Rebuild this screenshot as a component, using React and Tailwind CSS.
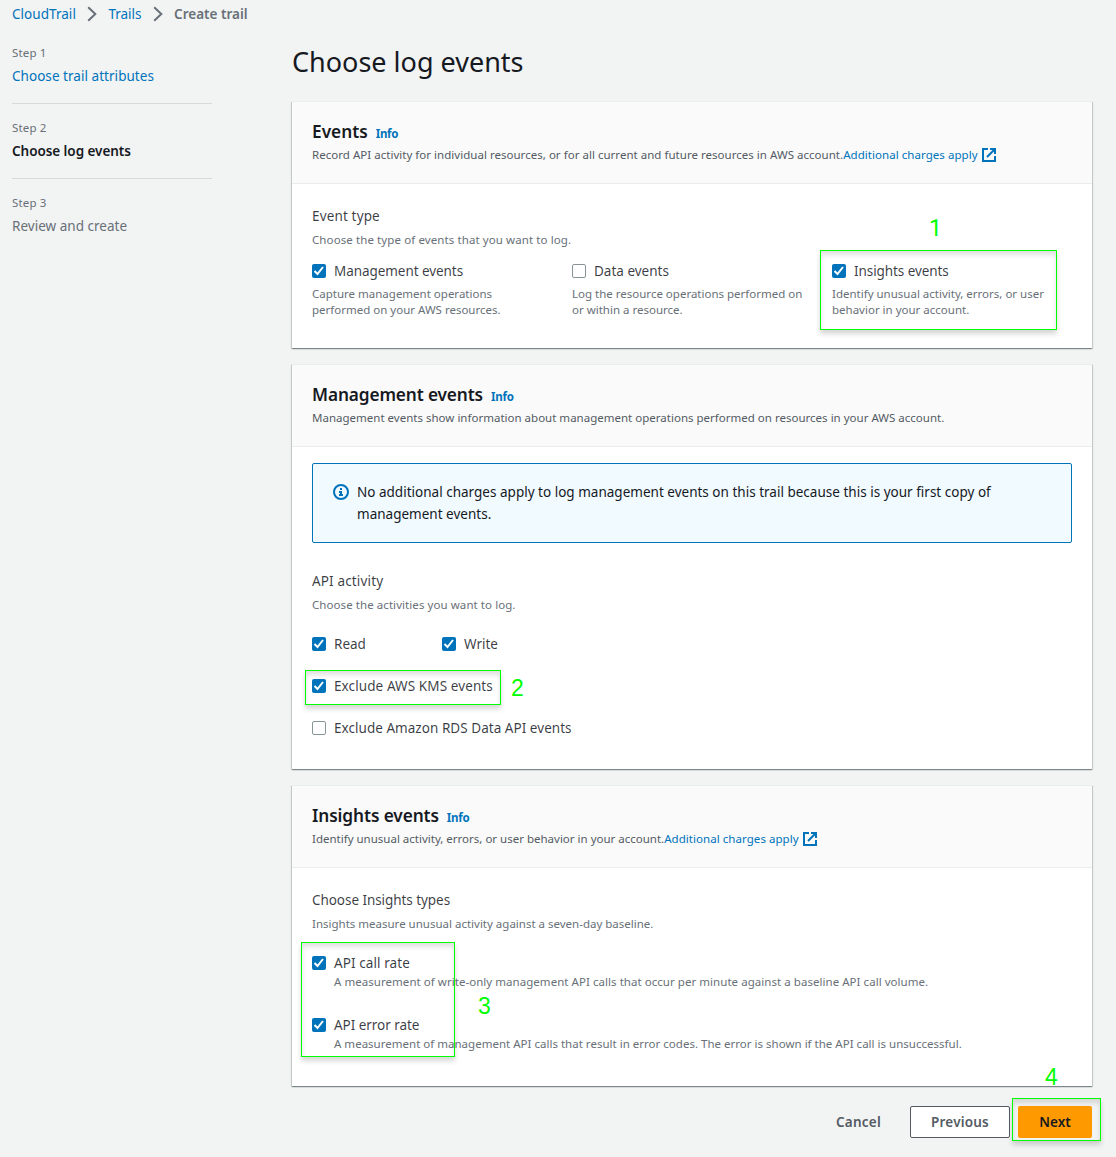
import React from "react";

function Chevron() {
  return (
    <svg className="ml-[8.5px] mr-2 h-4 w-4" viewBox="0 0 16 16" fill="none" stroke="#687078" strokeWidth="2">
      <path d="M4.2 1.3 11.3 8l-7.1 6.7" />
    </svg>
  );
}

function ExternalIcon() {
  return (
    <svg className="ml-[3px] h-4 w-4 shrink-0" viewBox="0 0 16 16" fill="none" stroke="#0073bb" strokeWidth="2">
      <path d="M7 2H2v12h12V9" />
      <path d="M9 2h5v5M6 10l7.5-7.5" />
    </svg>
  );
}

function InfoIcon() {
  return (
    <svg className="mt-[3px] h-4 w-4 shrink-0" viewBox="0 0 16 16" fill="none" stroke="#0073bb" strokeWidth="2">
      <circle cx="8" cy="8" r="7" />
      <path d="M8 4v2M6 8h2v3M6 11h4" />
    </svg>
  );
}

function Box({ checked }) {
  return checked ? (
    <span className="flex h-[14px] w-[14px] shrink-0 items-center justify-center rounded-[2px] bg-[#0073bb]">
      <svg className="h-[14px] w-[14px]" viewBox="0 0 14 14" fill="none" stroke="#fff" strokeWidth="2">
        <path d="M2.5 7 5.5 10l5.5-7" />
      </svg>
    </span>
  ) : (
    <span className="h-[14px] w-[14px] shrink-0 rounded-[2px] border border-[#879596] bg-white" />
  );
}

function Check({ checked = true, children, className = "" }) {
  return (
    <div className={"flex h-[22px] items-center gap-2 whitespace-nowrap text-[13.5px] leading-[22px] text-[#16191f]/85 " + className}>
      <Box checked={checked} />
      <span>{children}</span>
    </div>
  );
}

function Hint({ className = "", children }) {
  return <p className={"whitespace-nowrap text-[11.5px] leading-4 text-[#687078] " + className}>{children}</p>;
}

function Card({ title, titleClass, desc, descClass = "", link, className, children }) {
  return (
    <section
      className={
        "w-[800px] border-t border-[#eaeded] bg-white shadow-[0_1px_1px_0_rgba(0,28,36,0.3),1px_1px_1px_0_rgba(0,28,36,0.15),-1px_1px_1px_0_rgba(0,28,36,0.15)] " +
        className
      }
    >
      <header className="h-[82px] border-b border-[#eaeded] bg-[#fafafa] px-5 pt-[19px]">
        <div className="flex h-[22px] items-baseline gap-2 leading-[22px]">
          <h2 className={"font-semibold text-[#16191f] " + titleClass}>{title}</h2>
          <a className="text-[11.5px] font-bold tracking-[-0.25px] text-[#0073bb]">Info</a>
        </div>
        <div className="mt-1 flex h-4 items-center whitespace-nowrap text-[11.5px] leading-4 text-[#545b64]">
          <span className={descClass}>{desc}</span>
          {link && (
            <a className="flex items-center tracking-[0.05px] text-[#0073bb]">
              Additional charges apply
              <ExternalIcon />
            </a>
          )}
        </div>
      </header>
      <div className="px-5">{children}</div>
    </section>
  );
}

function Label({ children, className = "" }) {
  return <h3 className={"text-[13.5px] leading-[22px] text-[#16191f]/85 " + className}>{children}</h3>;
}

const frame =
  "pointer-events-none absolute border border-[#00ff00] shadow-[0_4px_5px_rgba(0,0,0,0.16),inset_0_4px_5px_rgba(0,0,0,0.12)] ";
const digit = "pointer-events-none absolute text-[23px] leading-6 text-[#00ff00] ";

export default function App() {
  return (
    <div className="relative h-[1157px] w-[1116px] overflow-hidden bg-[#f2f3f3] font-['Noto_Sans',sans-serif] text-[13.5px] leading-[22px]">
      <nav className="flex h-[25px] items-center pl-3 pt-[3px]">
        <a className="tracking-[0.04px] text-[#0073bb]">CloudTrail</a>
        <Chevron />
        <a className="text-[#0073bb]">Trails</a>
        <Chevron />
        <span className="font-semibold text-[#687078]">Create trail</span>
      </nav>

      <div className="flex pl-3">
        <aside className="w-[200px] shrink-0 pt-5">
          <div className="h-[59px] border-b border-[#d5dbdb]">
            <Hint className="tracking-[0.15px]">Step 1</Hint>
            <a className="mt-1 block tracking-[0.04px] text-[#0073bb]">Choose trail attributes</a>
          </div>
          <div className="mt-4 h-[59px] border-b border-[#d5dbdb]">
            <Hint className="tracking-[0.15px]">Step 2</Hint>
            <div className="mt-1 font-semibold tracking-[-0.05px] text-[#16191f]">Choose log events</div>
          </div>
          <div className="mt-4">
            <Hint className="tracking-[0.15px]">Step 3</Hint>
            <div className="mt-1 tracking-[0.02px] text-[#687078]">Review and create</div>
          </div>
        </aside>

        <main className="ml-20 w-[800px] pt-[19px]">
          <h1 className="h-9 text-[27px] leading-9 text-[#16191f]">Choose log events</h1>

          <Card
            title="Events"
            titleClass="text-[17.25px]"
            desc="Record API activity for individual resources, or for all current and future resources in AWS account."
            descClass="tracking-[0.027px]"
            link
            className="mt-[21px] h-[247px]"
          >
            <Label className="pt-[21px] tracking-[0.15px]">Event type</Label>
            <Hint className="mt-[5px] tracking-[0.1px]">Choose the type of events that you want to log.</Hint>
            <div className="mt-3 grid grid-cols-[260px_260px_240px]">
              <div>
                <Check className="tracking-[-0.06px]">Management events</Check>
                <Hint className="mt-1">
                  Capture management operations
                  <br />
                  performed on your AWS resources.
                </Hint>
              </div>
              <div>
                <Check checked={false}>Data events</Check>
                <Hint className="mt-1">
                  Log the resource operations performed on
                  <br />
                  or within a resource.
                </Hint>
              </div>
              <div>
                <Check className="tracking-[-0.08px]">Insights events</Check>
                <Hint className="mt-1">
                  Identify unusual activity, errors, or user
                  <br />
                  behavior in your account.
                </Hint>
              </div>
            </div>
          </Card>

          <Card
            title="Management events"
            titleClass="text-[17.25px] tracking-[-0.12px]"
            desc="Management events show information about management operations performed on resources in your AWS account."
            descClass="tracking-[0.008px]"
            className="mt-4 h-[405px]"
          >
            <div className="mt-4 flex h-20 gap-2 rounded-[2px] border border-[#0073bb] bg-[#f1faff] pl-5 pt-[17px] text-[#16191f]">
              <InfoIcon />
              <p className="w-[660px] tracking-[0.01px]">
                No additional charges apply to log management events on this trail because this is your first copy of
                management events.
              </p>
            </div>
            <Label className="mt-[27px] tracking-[0.15px]">API activity</Label>
            <Hint className="mt-[5px] tracking-[0.07px]">Choose the activities you want to log.</Hint>
            <div className="mt-5 grid grid-cols-[130px_130px]">
              <Check>Read</Check>
              <Check>Write</Check>
            </div>
            <Check className="mt-5 tracking-[0.1px]">Exclude AWS KMS events</Check>
            <Check checked={false} className="mt-5 tracking-[0.04px]">
              Exclude Amazon RDS Data API events
            </Check>
          </Card>

          <Card
            title="Insights events"
            titleClass="text-[17.25px] tracking-[-0.1px]"
            desc="Identify unusual activity, errors, or user behavior in your account."
            link
            className="mt-4 h-[301px]"
          >
            <Label className="pt-[21px] tracking-[-0.06px]">Choose Insights types</Label>
            <Hint className="mt-[5px]">Insights measure unusual activity against a seven-day baseline.</Hint>
            <Check className="mt-5 tracking-[0.09px]">API call rate</Check>
            <Hint className="pl-[22px] tracking-[0.045px]">
              A measurement of write-only management API calls that occur per minute against a baseline API call volume.
            </Hint>
            <Check className="mt-6 tracking-[-0.04px]">API error rate</Check>
            <Hint className="pl-[22px] tracking-[0.013px]">
              A measurement of management API calls that result in error codes. The error is shown if the API call is
              unsuccessful.
            </Hint>
          </Card>

          <div className="mt-5 flex h-8 items-center justify-end font-semibold text-[#545b64]">
            <button className="mr-[29px] tracking-[0.23px]">Cancel</button>
            <button className="mr-2 h-8 w-[100px] rounded-[2px] border border-[#545b64] bg-white tracking-[0.21px]">
              Previous
            </button>
            <button className="h-8 w-[74px] rounded-[2px] bg-[#ff9900] text-[#16191f]">Next</button>
          </div>
        </main>
      </div>

      <div className={frame + "left-[820px] top-[250px] h-[80px] w-[237px]"} />
      <span className={digit + "left-[929px] top-[217px] font-['Roboto',sans-serif]"}>1</span>
      <div className={frame + "left-[305px] top-[670px] h-[35px] w-[196px]"} />
      <span className={digit + "left-[511px] top-[676px] font-['Liberation_Sans',sans-serif]"}>2</span>
      <div className={frame + "left-[301px] top-[942px] h-[115px] w-[154px]"} />
      <span className={digit + "left-[478px] top-[994px] font-['Liberation_Sans',sans-serif]"}>3</span>
      <div className={frame + "left-[1012px] top-[1098px] h-[43px] w-[89px]"} />
      <span className={digit + "left-[1045px] top-[1065px] font-['Liberation_Sans',sans-serif]"}>4</span>
    </div>
  );
}
